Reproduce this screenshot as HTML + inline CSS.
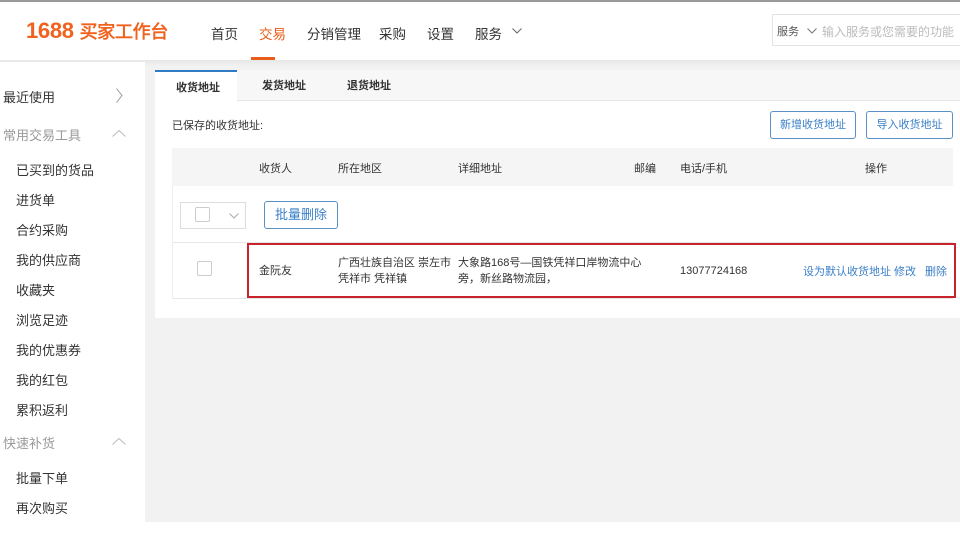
<html><head><style>
body{margin:0;width:960px;height:540px;overflow:hidden;background:#fff;font-family:"Liberation Sans","Noto Sans CJK SC",sans-serif;position:relative}
.a{position:absolute;white-space:nowrap}
.nav{font-size:13.5px;color:#333;top:23px}
.sb{font-size:13px;color:#333;left:16px}
.sg{font-size:13px;color:#999;left:3px}
.th{font-size:11px;color:#333;top:160px}
.td{font-size:11px;color:#333;line-height:16px}
.lk{color:#3a7fc8;font-size:11px}
.btn{border:1px solid #5b8fc7;border-radius:3px;color:#3a7fc8;font-size:11px;text-align:center;box-sizing:border-box;background:#fff}
svg{position:absolute}
</style></head><body>
<div class="a" style="left:0;top:0;width:960px;height:2px;background:#999"></div>
<div class="a" style="left:0;top:60px;width:960px;height:462px;background:#f2f2f2"></div>
<div class="a" style="left:0;top:60px;width:960px;height:6px;background:linear-gradient(#e6e6e6,#f2f2f2)"></div>
<div class="a" style="left:26px;top:18px;font-size:22px;font-weight:bold;color:#f0621e;letter-spacing:-0.3px">1688 <span style="font-size:18px;font-weight:normal;-webkit-text-stroke:0.6px #f0621e">买家工作台</span></div>
<div class="a nav" style="left:211px">首页</div>
<div class="a nav" style="left:259px;color:#e85d1a">交易</div>
<div class="a" style="left:251px;top:57px;width:24px;height:3px;background:#e85d1a"></div>
<div class="a nav" style="left:307px">分销管理</div>
<div class="a nav" style="left:379px">采购</div>
<div class="a nav" style="left:427px">设置</div>
<div class="a nav" style="left:475px">服务</div>
<svg style="left:512px;top:28px" width="10" height="6"><path d="M0.5 0.5L5 5 9.5 0.5" fill="none" stroke="#666"/></svg>
<div class="a" style="left:772px;top:14px;width:200px;height:32px;border:1px solid #e3e3e3;box-sizing:border-box"></div>
<div class="a" style="left:777px;top:23px;font-size:11px;color:#555">服务</div>
<svg style="left:807px;top:28px" width="10" height="6"><path d="M0.5 0.5L5 5 9.5 0.5" fill="none" stroke="#777"/></svg>
<div class="a" style="left:822px;top:23px;font-size:12px;color:#bbb">输入服务或您需要的功能</div>
<div class="a" style="left:0;top:62px;width:145px;height:460px;background:#fff"></div>
<div class="a sb" style="left:3px;top:87px">最近使用</div>
<svg style="left:116px;top:88px" width="7" height="15"><path d="M0.5 0.5L6 7.5 0.5 14.5" fill="none" stroke="#999"/></svg>
<div class="a sg" style="top:125px">常用交易工具</div>
<svg style="left:112px;top:130px" width="14" height="7"><path d="M0.5 6.5L7 0.5 13.5 6.5" fill="none" stroke="#bbb"/></svg>
<div class="a sb" style="top:160px">已买到的货品</div>
<div class="a sb" style="top:190px">进货单</div>
<div class="a sb" style="top:220px">合约采购</div>
<div class="a sb" style="top:250px">我的供应商</div>
<div class="a sb" style="top:280px">收藏夹</div>
<div class="a sb" style="top:310px">浏览足迹</div>
<div class="a sb" style="top:340px">我的优惠券</div>
<div class="a sb" style="top:370px">我的红包</div>
<div class="a sb" style="top:400px">累积返利</div>
<div class="a sg" style="top:433px">快速补货</div>
<svg style="left:112px;top:438px" width="14" height="7"><path d="M0.5 6.5L7 0.5 13.5 6.5" fill="none" stroke="#bbb"/></svg>
<div class="a sb" style="top:468px">批量下单</div>
<div class="a sb" style="top:498px">再次购买</div>
<div class="a" style="left:155px;top:70px;width:805px;height:248px;background:#fff"></div>
<div class="a" style="left:155px;top:70px;width:805px;height:30px;background:#f7f7f7;border-bottom:1px solid #e6e6e6"></div>
<div class="a" style="left:155px;top:70px;width:82px;height:31px;background:#fff;border-top:2px solid #2f7bc4;box-sizing:border-box"></div>
<div class="a" style="left:176px;top:79px;font-size:11px;font-weight:bold;color:#333">收货地址</div>
<div class="a" style="left:262px;top:77px;font-size:11px;font-weight:bold;color:#333">发货地址</div>
<div class="a" style="left:347px;top:77px;font-size:11px;font-weight:bold;color:#333">退货地址</div>
<div class="a" style="left:172px;top:117px;font-size:11px;color:#333">已保存的收货地址:</div>
<div class="a btn" style="left:770px;top:111px;width:86px;height:28px;line-height:26px">新增收货地址</div>
<div class="a btn" style="left:866px;top:111px;width:87px;height:28px;line-height:26px">导入收货地址</div>
<div class="a" style="left:172px;top:148px;width:781px;height:38px;background:#f5f5f5"></div>
<div class="a th" style="left:259px">收货人</div>
<div class="a th" style="left:338px">所在地区</div>
<div class="a th" style="left:458px">详细地址</div>
<div class="a th" style="left:634px">邮编</div>
<div class="a th" style="left:680px">电话/手机</div>
<div class="a th" style="left:865px">操作</div>
<div class="a" style="left:172px;top:242px;width:781px;height:1px;background:#e6e6e6"></div>
<div class="a" style="left:172px;top:298px;width:781px;height:1px;background:#e6e6e6"></div>
<div class="a" style="left:172px;top:186px;width:1px;height:113px;background:#eee"></div>
<div class="a" style="left:180px;top:202px;width:66px;height:27px;border:1px solid #ddd;box-sizing:border-box"></div>
<div class="a" style="left:195px;top:207px;width:13px;height:13px;border:1px solid #ccc;border-radius:2px"></div>
<svg style="left:229px;top:213px" width="10" height="6"><path d="M0.5 0.5L5 5 9.5 0.5" fill="none" stroke="#aaa"/></svg>
<div class="a btn" style="left:264px;top:201px;width:74px;height:28px;line-height:26px;font-size:13px">批量删除</div>
<div class="a" style="left:197px;top:261px;width:13px;height:13px;border:1px solid #ccc;border-radius:2px"></div>
<div class="a td" style="left:259px;top:263px">金阮友</div>
<div class="a td" style="left:338px;top:255px">广西壮族自治区 崇左市<br>凭祥市 凭祥镇</div>
<div class="a td" style="left:458px;top:255px">大象路168号—国铁凭祥口岸物流中心<br>旁，新丝路物流园，</div>
<div class="a td" style="left:680px;top:263px">13077724168</div>
<div class="a lk" style="left:803px;top:263px">设为默认收货地址</div>
<div class="a lk" style="left:894px;top:263px">修改</div>
<div class="a lk" style="left:925px;top:263px">删除</div>
<div class="a" style="left:247px;top:243px;width:709px;height:55px;border:2px solid #c8232c;box-sizing:border-box"></div>
</body></html>
